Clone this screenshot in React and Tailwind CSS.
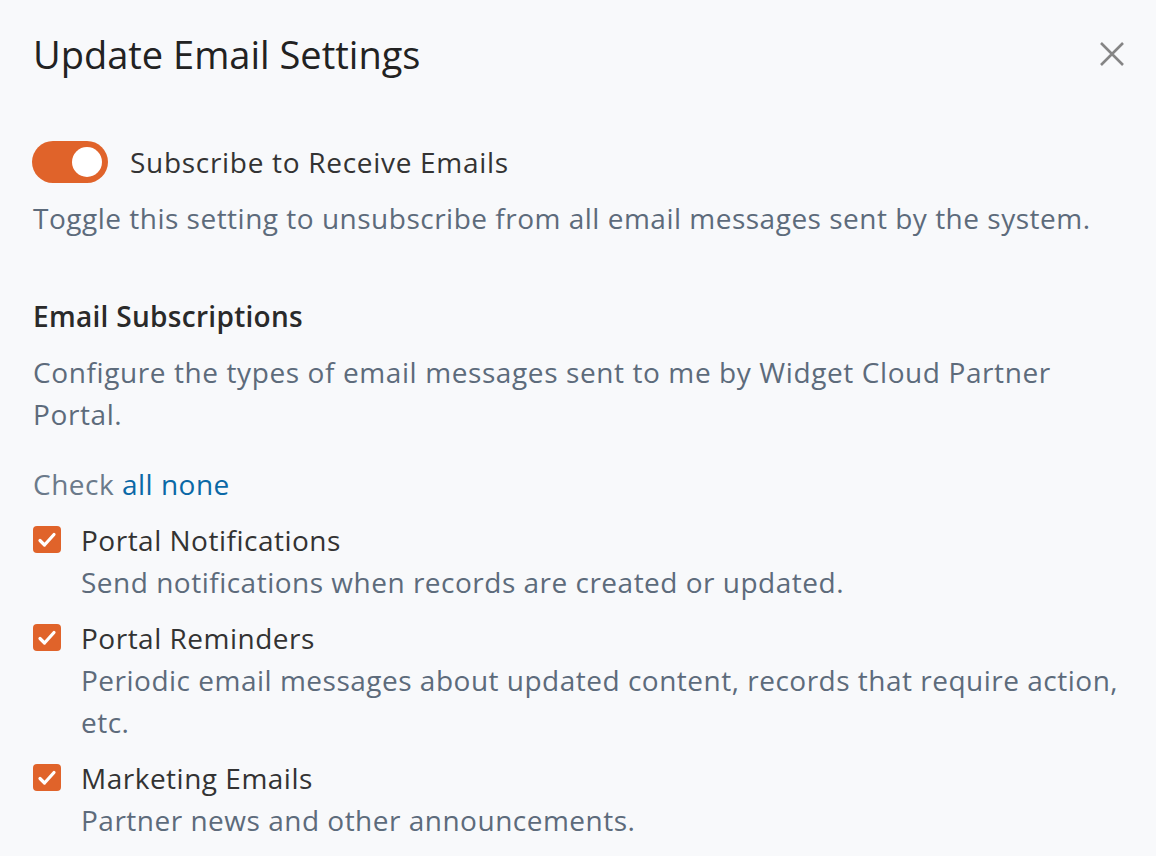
import React from "react";

const font = { fontFamily: '"Open Sans", "Noto Sans", sans-serif' };

function Check() {
  return (
    <div className="w-[28px] h-[27px] rounded-[4px] bg-[#e0632a] flex items-center justify-center shrink-0">
      <svg width="24" height="24" viewBox="0 0 24 24" fill="none" stroke="white" strokeWidth="3.2" strokeLinecap="round" strokeLinejoin="round">
        <path d="M5 12.5l4.5 4.5L19 6.5" />
      </svg>
    </div>
  );
}

function Item({ title, desc }) {
  return (
    <div className="flex gap-[20px]">
      <div className="pt-[7px]"><Check /></div>
      <div className="flex flex-col">
        <div className="text-[28px] leading-[42px] tracking-[0.5px] text-[#333333]">{title}</div>
        <div className="text-[28px] leading-[42px] tracking-[0.5px] text-[#5d6b7b]">{desc}</div>
      </div>
    </div>
  );
}

export default function App() {
  return (
    <div className="w-[1156px] h-[856px] bg-[#f8f9fb] overflow-hidden" style={font}>
      <div className="pl-[33px] pr-[32px]">
        <div className="flex items-center justify-between h-[108px]">
          <h1 className="text-[38px] text-[#222222] tracking-[0px]">Update Email Settings</h1>
          <svg width="26" height="26" viewBox="0 0 26 26" className="mr-[-1px]" stroke="#858585" strokeWidth="2.6" strokeLinecap="butt">
            <path d="M2 2L24 24M24 2L2 24" />
          </svg>
        </div>
        <div className="flex items-center gap-[22px] mt-[33px]">
          <div className="w-[76px] h-[42px] rounded-full bg-[#e0632a] flex items-center justify-end pr-[6px] -ml-[1px]">
            <div className="w-[30px] h-[30px] rounded-full bg-white" />
          </div>
          <div className="text-[28px] tracking-[0.7px] text-[#333333]">Subscribe to Receive Emails</div>
        </div>
        <p className="text-[28px] leading-[42px] tracking-[0.5px] text-[#5d6b7b] mt-[14px]">
          Toggle this setting to unsubscribe from all email messages sent by the system.
        </p>
        <h2 className="text-[28px] leading-[42px] font-semibold tracking-[0.3px] text-[#2a2a2a] mt-[56px]">Email Subscriptions</h2>
        <p className="text-[28px] leading-[42px] tracking-[0.6px] text-[#5d6b7b] mt-[14px]">
          Configure the types of email messages sent to me by Widget Cloud Partner Portal.
        </p>
        <div className="text-[28px] leading-[42px] tracking-[0.5px] mt-[28px] text-[#6b7a8a]">
          Check <span className="text-[#0a68a6]">all</span> <span className="text-[#0a68a6]">none</span>
        </div>
        <div className="flex flex-col gap-[14px] mt-[14px]">
          <Item title="Portal Notifications" desc="Send notifications when records are created or updated." />
          <Item title="Portal Reminders" desc="Periodic email messages about updated content, records that require action, etc." />
          <Item title="Marketing Emails" desc="Partner news and other announcements." />
        </div>
      </div>
    </div>
  );
}
